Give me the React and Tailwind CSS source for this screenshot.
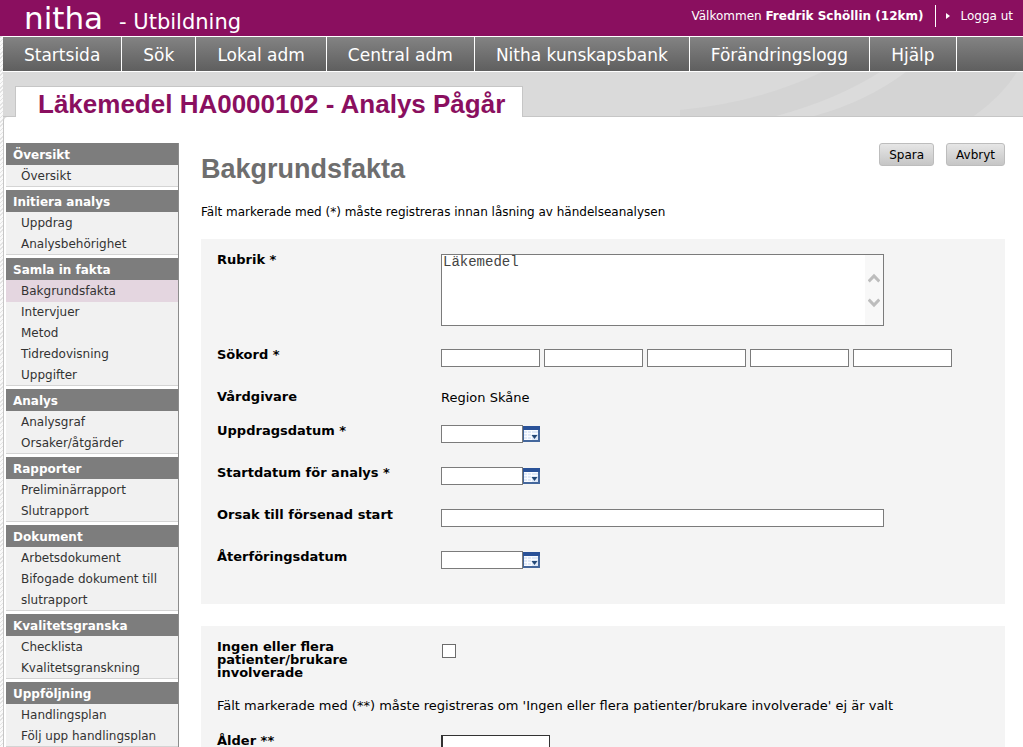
import { useState } from 'react'

const NAV = ['Startsida', 'Sök', 'Lokal adm', 'Central adm', 'Nitha kunskapsbank', 'Förändringslogg', 'Hjälp']

const MENU = [
  { title: 'Översikt', items: ['Översikt'] },
  { title: 'Initiera analys', items: ['Uppdrag', 'Analysbehörighet'] },
  { title: 'Samla in fakta', items: ['Bakgrundsfakta', 'Intervjuer', 'Metod', 'Tidredovisning', 'Uppgifter'] },
  { title: 'Analys', items: ['Analysgraf', 'Orsaker/åtgärder'] },
  { title: 'Rapporter', items: ['Preliminärrapport', 'Slutrapport'] },
  { title: 'Dokument', items: ['Arbetsdokument', 'Bifogade dokument till slutrapport'] },
  { title: 'Kvalitetsgranska', items: ['Checklista', 'Kvalitetsgranskning'] },
  { title: 'Uppföljning', items: ['Handlingsplan', 'Följ upp handlingsplan'] },
]

const INPUT = 'block h-[18px] border border-[#7b7b7b] bg-white px-1 text-xs outline-none'

function TopBar() {
  return (
    <header className="flex h-9 justify-between bg-[#8a0f5f] text-white">
      <div className="flex items-baseline gap-4 pl-6">
        <span className="text-[31px] leading-9">nitha</span>
        <span className="text-[21px] leading-9">- Utbildning</span>
      </div>
      <div className="flex h-8 items-center pr-[10px] text-xs">
        <span>
          Välkommen <b>Fredrik Schöllin (12km)</b>
        </span>
        <span className="ml-3 h-[22px] w-px bg-white" />
        <a href="#" className="ml-[10px] flex items-center gap-[10px]">
          <svg width="4" height="6" viewBox="0 0 4 6">
            <path d="M0 0 4 3 0 6z" fill="#fff" />
          </svg>
          Logga ut
        </a>
      </div>
    </header>
  )
}

function NavBar() {
  return (
    <nav className="ml-[3px] flex border-y border-white bg-linear-to-b from-[#838383] to-[#5f5f5f] text-[17px] text-white">
      {NAV.map((label) => (
        <a key={label} href="#" className="border-r border-white px-[21px] pt-[2px] leading-8">
          {label}
        </a>
      ))}
    </nav>
  )
}

function Banner() {
  return (
    <div className="relative flex h-[45px] items-end border-b border-[#c6c6c6] bg-[#dadada] pl-3">
      <svg className="absolute right-0 bottom-0" width="343" height="44" viewBox="0 0 343 44">
        <path d="M0 38Q80 30 142 0H343V44H0z" fill="#d4d4d4" />
        <path d="M96 44Q156 28 200 0H226Q186 30 134 44z" fill="#dbdbdb" />
        <path d="M294 44Q322 24 337 0H343V44z" fill="#dadada" />
      </svg>
      <h1 className="relative top-px h-[31px] border-t border-x border-[#c6c6c6] bg-white pr-[17px] pl-[22px] font-['Liberation_Sans',sans-serif] text-[26px] leading-[35px] font-bold text-[#8a0f5f]">
        Läkemedel HA0000102 - Analys Pågår
      </h1>
    </div>
  )
}

function Sidebar() {
  return (
    <aside className="w-[173px] shrink-0 border-r border-[#8c8c8c] text-xs">
      {MENU.map((group) => (
        <section key={group.title} className="mb-[3px]">
          <h3 className="bg-[#7d7d7d] pt-[2px] pl-[7px] leading-5 font-bold text-white">{group.title}</h3>
          <ul className="border-b border-[#d4d4d4] bg-[#f1f1f1]">
            {group.items.map((item) => (
              <li key={item} className={item === 'Bakgrundsfakta' ? 'bg-[#e4d6e0]' : ''}>
                <a href="#" className="-mb-px block pt-px pr-2 pl-[15px] leading-[21px] text-[#333]">
                  {item}
                </a>
              </li>
            ))}
          </ul>
        </section>
      ))}
    </aside>
  )
}

function Row({ label, id, className = 'h-[42px]', children }) {
  return (
    <div className={`flex ${className}`}>
      <label htmlFor={id} className="w-56 shrink-0 pr-11 text-[13px] leading-[13px] font-bold">
        {label}
      </label>
      <div className="pt-px">{children}</div>
    </div>
  )
}

function DateField({ id }) {
  return (
    <div className="flex items-start">
      <input id={id} type="text" className={`${INPUT} w-[82px]`} />
      <button type="button" aria-label="Välj datum">
        <svg className="block" width="17" height="17" viewBox="0 0 17 17">
          <path d="M0 1H17V17H0z" fill="#44679c" />
          <path d="M0 1H17V5H0z" fill="#2a5298" />
          <path d="M1 5H15V15H1z" fill="#dfe9f8" />
          <path d="M1 5.500H15M1 8.500H15M1 11.500H9M1 14.500H9M4.500 5V15M8.500 5V15" stroke="#fafcff" />
          <path d="M8.500 10H14.500L11.500 14z" fill="#234876" />
        </svg>
      </button>
    </div>
  )
}

function ScrollArrows() {
  return (
    <div className="absolute inset-y-px right-px flex w-[18px] flex-col items-center justify-center gap-[15px] bg-[#f8f8f8]">
      <svg width="12" height="10" viewBox="0 0 12 10">
        <path d="M0.700 8.500 6 3 11.300 8.500" fill="none" stroke="#bdbdbd" strokeWidth="3" />
      </svg>
      <svg width="12" height="10" viewBox="0 0 12 10">
        <path d="M0.700 1.500 6 7 11.300 1.500" fill="none" stroke="#bdbdbd" strokeWidth="3" />
      </svg>
    </div>
  )
}

export default function App() {
  const [rubrik, setRubrik] = useState('Läkemedel')
  const [noPatients, setNoPatients] = useState(false)

  return (
    <div className="h-screen overflow-hidden bg-[repeating-linear-gradient(135deg,#fafafa_0_2px,#e4e4e4_2px_3px)] font-['DejaVu_Sans',Verdana,sans-serif] text-black">
      <TopBar />
      <NavBar />
      <div className="ml-[3px] bg-[#dadada]">
        <Banner />
        <div className="flex gap-[22px] rounded-tl border-l border-[#c6c6c6] bg-white pt-[26px] pr-[18px] pl-[2px]">
          <Sidebar />
          <main className="min-w-0 flex-1">
            <div className="flex items-start justify-between">
              <h2 className="pt-[10px] font-['Liberation_Sans',sans-serif] text-[27px] leading-8 font-bold text-[#6e6e6e]">
                Bakgrundsfakta
              </h2>
              <div className="flex gap-3 text-xs">
                {['Spara', 'Avbryt'].map((label) => (
                  <button
                    key={label}
                    type="button"
                    className="h-[23px] rounded-[3px] border border-[#bdbdbd] bg-linear-to-b from-[#e6e6e6] to-[#c6c6c6] px-[9px]"
                  >
                    {label}
                  </button>
                ))}
              </div>
            </div>
            <p className="pt-[17px] text-xs leading-5">
              Fält markerade med (*) måste registreras innan låsning av händelseanalysen
            </p>

            <section className="mt-[17px] bg-[#f4f4f4] px-4 pt-[14px] pb-3">
              <Row label="Rubrik *" id="rubrik" className="h-[95px]">
                <div className="relative h-[72px] w-[443px]">
                  <textarea
                    id="rubrik"
                    value={rubrik}
                    onChange={(e) => setRubrik(e.target.value)}
                    className="block size-full resize-none border border-[#7b7b7b] bg-white pr-5 pl-px font-['Liberation_Mono',monospace] text-sm leading-[14px] text-[#444] outline-none"
                  />
                  <ScrollArrows />
                </div>
              </Row>
              <Row label="Sökord *" id="sokord1">
                <div className="flex items-start gap-1">
                  {[1, 2, 3, 4, 5].map((n) => (
                    <input key={n} id={`sokord${n}`} aria-label={`Sökord ${n}`} type="text" className={`${INPUT} w-[99px]`} />
                  ))}
                </div>
              </Row>
              <Row label="Vårdgivare" className="h-[34px]">
                <span className="block text-[13px] leading-[13px]">Region Skåne</span>
              </Row>
              <Row label="Uppdragsdatum *" id="uppdragsdatum">
                <DateField id="uppdragsdatum" />
              </Row>
              <Row label="Startdatum för analys *" id="startdatum">
                <DateField id="startdatum" />
              </Row>
              <Row label="Orsak till försenad start" id="orsak">
                <input id="orsak" type="text" className={`${INPUT} w-[443px]`} />
              </Row>
              <Row label="Återföringsdatum" id="aterforing">
                <DateField id="aterforing" />
              </Row>
            </section>

            <section className="mt-[22px] bg-[#f4f4f4] px-4 pt-[14px] pb-4">
              <Row label="Ingen eller flera patienter/brukare involverade" id="ingen" className="h-14">
                <input
                  id="ingen"
                  type="checkbox"
                  checked={noPatients}
                  onChange={(e) => setNoPatients(e.target.checked)}
                  className="mt-[3px] ml-px block size-[14px] appearance-none border border-[#6b6b6b] bg-white checked:bg-[#6b6b6b]"
                />
              </Row>
              <p className="h-[38px] text-[13px] leading-5">
                Fält markerade med (**) måste registreras om 'Ingen eller flera patienter/brukare involverade' ej är valt
              </p>
              <Row label="Ålder **" id="alder">
                <input id="alder" type="text" className="block h-5 w-[109px] border border-l-2 border-[#333] bg-white px-1 text-xs outline-none" />
              </Row>
            </section>
          </main>
        </div>
      </div>
    </div>
  )
}
